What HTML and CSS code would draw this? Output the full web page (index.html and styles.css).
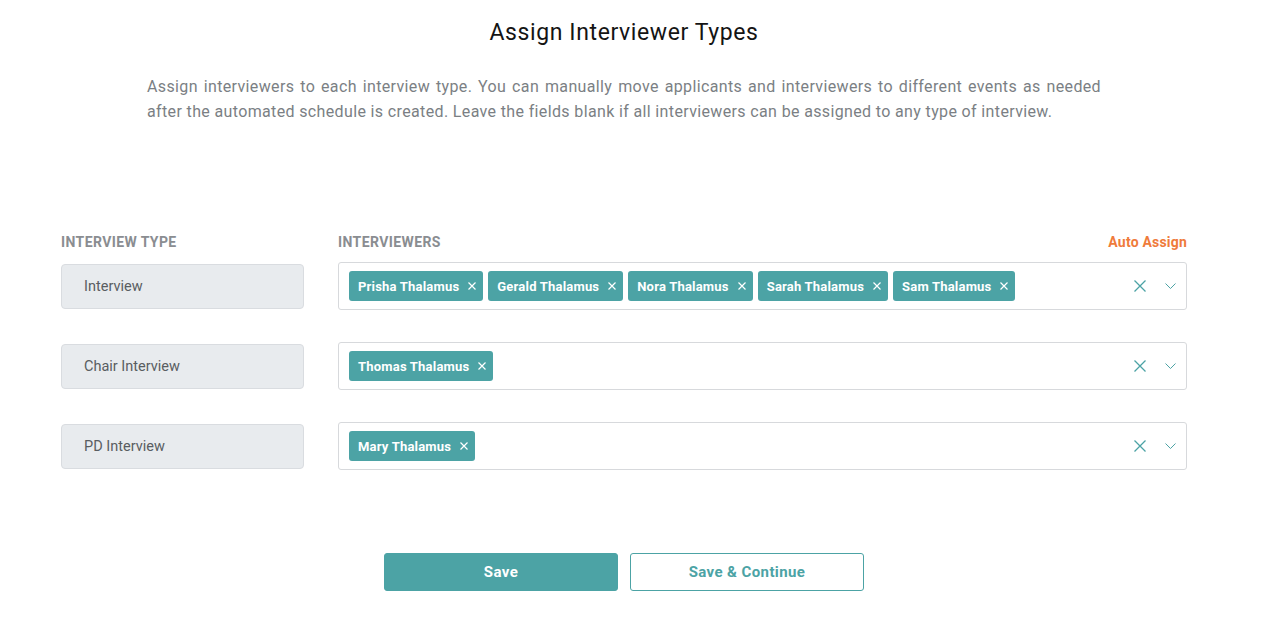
FILE: index.html
```html
<!DOCTYPE html>
<html>
<head>
<meta charset="utf-8">
<link rel="stylesheet" href="styles.css">
</head>
<body>
<div class="page">
  <h1 class="title">Assign Interviewer Types</h1>
  <p class="intro">Assign interviewers to each interview type. You can manually move applicants and interviewers to different events as needed after the automated schedule is created. Leave the fields blank if all interviewers can be assigned to any type of interview.</p>

  <div class="form">
    <div class="head-row">
      <div class="col-label type-col">INTERVIEW TYPE</div>
      <div class="col-label sel-col">INTERVIEWERS</div>
      <a class="auto">Auto Assign</a>
    </div>

    <div class="row">
      <div class="type-box">Interview</div>
      <div class="select">
        <div class="chips">
          <span class="chip">Prisha Thalamus<svg class="chip-x" viewBox="0 0 8 8"><path d="M0.5 0.5L7.5 7.5M7.5 0.5L0.5 7.5"/></svg></span>
          <span class="chip">Gerald Thalamus<svg class="chip-x" viewBox="0 0 8 8"><path d="M0.5 0.5L7.5 7.5M7.5 0.5L0.5 7.5"/></svg></span>
          <span class="chip">Nora Thalamus<svg class="chip-x" viewBox="0 0 8 8"><path d="M0.5 0.5L7.5 7.5M7.5 0.5L0.5 7.5"/></svg></span>
          <span class="chip">Sarah Thalamus<svg class="chip-x" viewBox="0 0 8 8"><path d="M0.5 0.5L7.5 7.5M7.5 0.5L0.5 7.5"/></svg></span>
          <span class="chip">Sam Thalamus<svg class="chip-x" viewBox="0 0 8 8"><path d="M0.5 0.5L7.5 7.5M7.5 0.5L0.5 7.5"/></svg></span>
        </div>
        <div class="controls">
          <svg class="clear" viewBox="0 0 12 12"><path d="M0.5 0.5L11.5 11.5M11.5 0.5L0.5 11.5"/></svg>
          <svg class="chev" viewBox="0 0 11 6"><path d="M0.5 0.5L5.5 5.5L10.5 0.5"/></svg>
        </div>
      </div>
    </div>

    <div class="row">
      <div class="type-box">Chair Interview</div>
      <div class="select">
        <div class="chips">
          <span class="chip">Thomas Thalamus<svg class="chip-x" viewBox="0 0 8 8"><path d="M0.5 0.5L7.5 7.5M7.5 0.5L0.5 7.5"/></svg></span>
        </div>
        <div class="controls">
          <svg class="clear" viewBox="0 0 12 12"><path d="M0.5 0.5L11.5 11.5M11.5 0.5L0.5 11.5"/></svg>
          <svg class="chev" viewBox="0 0 11 6"><path d="M0.5 0.5L5.5 5.5L10.5 0.5"/></svg>
        </div>
      </div>
    </div>

    <div class="row">
      <div class="type-box">PD Interview</div>
      <div class="select">
        <div class="chips">
          <span class="chip">Mary Thalamus<svg class="chip-x" viewBox="0 0 8 8"><path d="M0.5 0.5L7.5 7.5M7.5 0.5L0.5 7.5"/></svg></span>
        </div>
        <div class="controls">
          <svg class="clear" viewBox="0 0 12 12"><path d="M0.5 0.5L11.5 11.5M11.5 0.5L0.5 11.5"/></svg>
          <svg class="chev" viewBox="0 0 11 6"><path d="M0.5 0.5L5.5 5.5L10.5 0.5"/></svg>
        </div>
      </div>
    </div>
  </div>

  <div class="actions">
    <button class="btn btn-primary">Save</button>
    <button class="btn btn-outline">Save &amp; Continue</button>
  </div>
</div>
</body>
</html>
```
FILE: styles.css
```css
* { box-sizing: border-box; }
html, body { margin: 0; padding: 0; background: #fff; }
body { font-family: Roboto, "Liberation Sans", sans-serif; color: #1a1a1a; }

.page { width: 1248px; padding-top: 19px; }

.title {
  margin: 0;
  text-align: center;
  font-size: 23px;
  line-height: 28px;
  font-weight: 400;
  color: #141414;
  letter-spacing: 0.6px;
}

.intro {
  width: 954px;
  margin: 27px auto 0;
  font-size: 16px;
  line-height: 25px;
  color: #7b7f84;
  text-align: justify;
  letter-spacing: 0.36px;
}

.form {
  width: 1126px;
  margin: 110px auto 0;
  display: flex;
  flex-direction: column;
}

.head-row {
  display: flex;
  align-items: center;
  height: 16px;
  margin-bottom: 12px;
}
.col-label {
  font-size: 14px;
  font-weight: 700;
  color: #8a8d91;
  letter-spacing: 0.4px;
}
.type-col { width: 277px; }
.sel-col { flex: 1; }
.auto {
  font-size: 14px;
  font-weight: 700;
  color: #ef7b3b;
  letter-spacing: 0.2px;
  cursor: pointer;
}

.row {
  display: flex;
  align-items: center;
  gap: 34px;
}
.row + .row { margin-top: 32px; }

.type-box {
  width: 243px;
  height: 45px;
  display: flex;
  align-items: center;
  padding-left: 22px;
  background: #e8ebee;
  border: 1px solid #d9dce0;
  border-radius: 4px;
  font-size: 14.5px;
  color: #595d61;
}

.select {
  width: 849px;
  height: 48px;
  display: flex;
  align-items: center;
  border: 1px solid #d7d9dc;
  border-radius: 3px;
  padding-left: 10px;
  padding-right: 10px;
}
.chips { flex: 1; display: flex; gap: 5px; }
.chip {
  display: inline-flex;
  align-items: center;
  height: 30px;
  padding: 0 7px 0 9px;
  background: #4ca3a5;
  color: #fff;
  border-radius: 3px;
  font-size: 13px;
  font-weight: 700;
  letter-spacing: 0.2px;
}
.chip-x {
  width: 8px;
  height: 8px;
  margin-left: 9px;
  stroke: #fff;
  stroke-width: 1.2;
  fill: none;
}
.controls { display: flex; align-items: center; gap: 19px; }
.clear { width: 12px; height: 12px; stroke: #4ca3a5; stroke-width: 1.3; fill: none; }
.chev { width: 11px; height: 6px; stroke: #4ca3a5; stroke-width: 1; fill: none; }

.actions {
  display: flex;
  justify-content: center;
  gap: 12px;
  margin-top: 83px;
}
.btn {
  width: 234px;
  height: 38px;
  border-radius: 3px;
  font-family: inherit;
  font-size: 15px;
  font-weight: 700;
  letter-spacing: 0.4px;
  cursor: pointer;
}
.btn-primary { background: #4ca3a5; color: #fff; border: 1px solid #4ca3a5; }
.btn-outline { background: #fff; color: #4ca3a5; border: 1px solid #4ca3a5; }
```
